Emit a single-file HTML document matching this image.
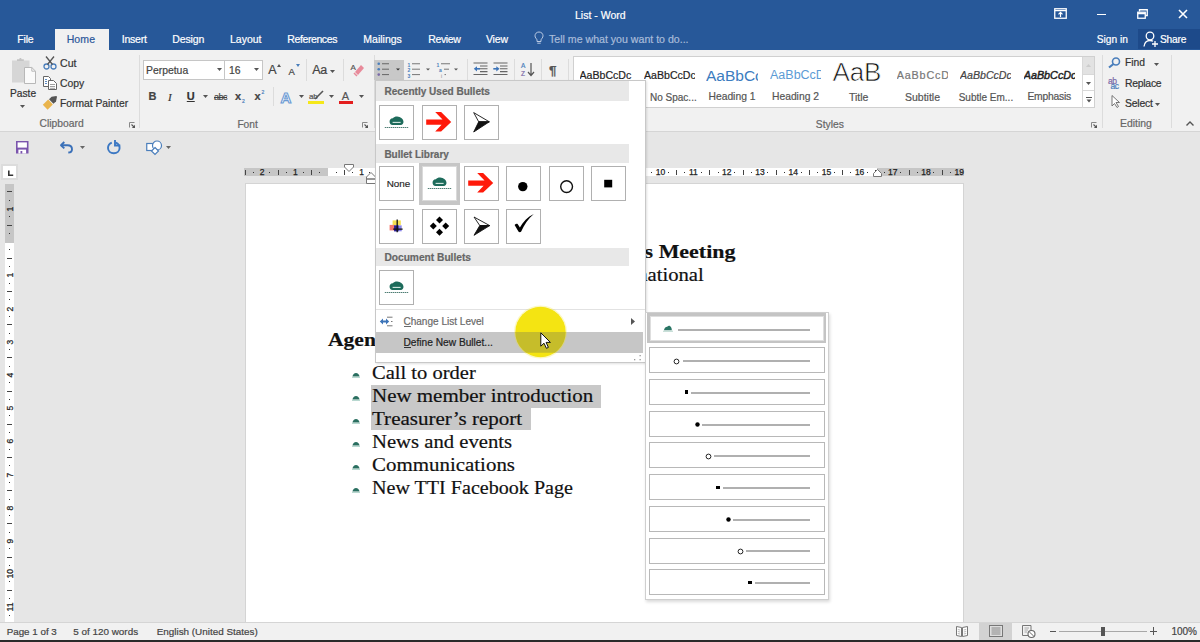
<!DOCTYPE html>
<html><head><meta charset="utf-8">
<style>
*{margin:0;padding:0;box-sizing:border-box}
html,body{width:1200px;height:642px;overflow:hidden;background:#e6e6e6;font-family:"Liberation Sans",sans-serif}
body{position:relative}
.a{position:absolute}
.t{position:absolute;white-space:nowrap;line-height:1;-webkit-text-stroke:0.2px currentColor}
svg{overflow:visible}
</style></head><body>

<div class="a" style="left:0.00px;top:0.00px;width:1200.00px;height:50.00px;background:#275899"></div>
<div class="t" style="left:575.00px;top:10.11px;font-size:10.5px;color:#fff;font-family:'Liberation Sans',sans-serif;">List - Word</div>
<div class="a" style="left:55.00px;top:29.00px;width:53.50px;height:21.00px;background:#f1f1f1"></div>
<div class="t" style="left:17.30px;top:34.41px;font-size:10.5px;color:#fff;font-family:'Liberation Sans',sans-serif;letter-spacing:-0.2px">File</div>
<div class="t" style="left:66.70px;top:34.41px;font-size:10.5px;color:#2b579a;font-family:'Liberation Sans',sans-serif;letter-spacing:0.1px">Home</div>
<div class="t" style="left:121.70px;top:34.41px;font-size:10.5px;color:#fff;font-family:'Liberation Sans',sans-serif;letter-spacing:-0.2px">Insert</div>
<div class="t" style="left:172.30px;top:34.41px;font-size:10.5px;color:#fff;font-family:'Liberation Sans',sans-serif;letter-spacing:-0.15px">Design</div>
<div class="t" style="left:230.00px;top:34.41px;font-size:10.5px;color:#fff;font-family:'Liberation Sans',sans-serif;letter-spacing:0px">Layout</div>
<div class="t" style="left:287.30px;top:34.41px;font-size:10.5px;color:#fff;font-family:'Liberation Sans',sans-serif;letter-spacing:-0.4px">References</div>
<div class="t" style="left:363.30px;top:34.41px;font-size:10.5px;color:#fff;font-family:'Liberation Sans',sans-serif;letter-spacing:0px">Mailings</div>
<div class="t" style="left:428.30px;top:34.41px;font-size:10.5px;color:#fff;font-family:'Liberation Sans',sans-serif;letter-spacing:-0.4px">Review</div>
<div class="t" style="left:486.00px;top:34.41px;font-size:10.5px;color:#fff;font-family:'Liberation Sans',sans-serif;letter-spacing:-0.2px">View</div>
<div class="t" style="left:549.00px;top:34.33px;font-size:10.6px;color:#a9bcd9;font-family:'Liberation Sans',sans-serif;">Tell me what you want to do...</div>
<div class="t" style="left:1096.70px;top:34.67px;font-size:10.2px;color:#fff;font-family:'Liberation Sans',sans-serif;">Sign in</div>
<div class="a" style="left:1138.00px;top:29.30px;width:62.00px;height:20.20px;background:#1d4a8a"></div>
<div class="t" style="left:1160.00px;top:34.67px;font-size:10.2px;color:#fff;font-family:'Liberation Sans',sans-serif;letter-spacing:-0.2px">Share</div>
<svg class="a" style="left:1054px;top:8px;" width="13" height="11" viewBox="0 0 13 11"><rect x="0.75" y="0.75" width="11.5" height="9.5" fill="none" stroke="#fff" stroke-width="1.3"/><path d="M0.75 2.6 H12.25" stroke="#fff" stroke-width="1.3"/><path d="M6.5 9 V4.5 M4.5 6.3 L6.5 4.3 L8.5 6.3" stroke="#fff" stroke-width="1.2" fill="none"/></svg>
<div class="a" style="left:1097.00px;top:13.50px;width:8.50px;height:1.70px;background:#fff"></div>
<svg class="a" style="left:1137px;top:9px;" width="11" height="10" viewBox="0 0 11 10"><path d="M2.5 2.5 V0.75 H10.25 V6.5 H8.5" fill="none" stroke="#fff" stroke-width="1.3"/><rect x="0.75" y="3.25" width="7.5" height="6" fill="none" stroke="#fff" stroke-width="1.3"/><path d="M0.75 4.6 H8.25" stroke="#fff" stroke-width="1.3"/></svg>
<svg class="a" style="left:1178px;top:9px;" width="10" height="10" viewBox="0 0 10 10"><path d="M1 1 L9 9 M9 1 L1 9" stroke="#fff" stroke-width="1.6"/></svg>
<svg class="a" style="left:534px;top:31px;" width="10" height="14" viewBox="0 0 10 14"><path d="M5 1 C2.5 1 1 2.8 1 4.8 C1 6.6 2.3 7.5 3 8.8 V10.5 H7 V8.8 C7.7 7.5 9 6.6 9 4.8 C9 2.8 7.5 1 5 1 Z" fill="none" stroke="#b9c9e3" stroke-width="1"/><path d="M3.3 12.2 H6.7" stroke="#b9c9e3" stroke-width="1"/></svg>
<svg class="a" style="left:1143px;top:31px;" width="16" height="17" viewBox="0 0 16 17"><circle cx="7" cy="5" r="3.8" fill="none" stroke="#fff" stroke-width="1.3"/><path d="M1 15.5 C1.5 11.5 3.8 9.5 7 9.5 C8.3 9.5 9.3 9.8 10 10.3" fill="none" stroke="#fff" stroke-width="1.3"/><path d="M12 10 V16 M9 13 H15" stroke="#fff" stroke-width="1.3"/></svg>
<div class="a" style="left:0.00px;top:50.00px;width:1200.00px;height:82.00px;background:#f1f1f1;border-bottom:1px solid #d5d5d5"></div>
<svg class="a" style="left:11px;top:57px;" width="26" height="28" viewBox="0 0 26 28"><rect x="1" y="3.5" width="17.5" height="22" fill="#d6d6d6"/><path d="M6 4 V2.2 H8.2 C8.4 0.6 10.4 0.6 10.6 2.2 H12.8 V4 Z" fill="#c4c4c4"/><path d="M13.5 10.5 H20.8 L24.5 14.2 V26.5 H13.5 Z" fill="#fafafa" stroke="#b8b8b8" stroke-width="1"/><path d="M20.8 10.5 V14.2 H24.5" fill="none" stroke="#b8b8b8" stroke-width="1"/></svg>
<div class="t" style="left:10.00px;top:88.57px;font-size:10.2px;color:#333;font-family:'Liberation Sans',sans-serif;">Paste</div>
<svg class="a" style="left:20px;top:104.5px;" width="5" height="3" viewBox="0 0 5 3"><path d="M0 0 H5 L2.5 3 Z" fill="#555"/></svg>
<svg class="a" style="left:43px;top:56px;" width="14" height="14" viewBox="0 0 14 14"><circle cx="3.5" cy="10.5" r="2.5" fill="none" stroke="#4a7ebb" stroke-width="1.3"/><circle cx="10.5" cy="10.5" r="2.5" fill="none" stroke="#4a7ebb" stroke-width="1.3"/><path d="M4.5 8.5 L11 0.5 M9.5 8.5 L3 0.5" stroke="#555" stroke-width="1.3"/></svg>
<div class="t" style="left:60.00px;top:58.23px;font-size:10.6px;color:#333;font-family:'Liberation Sans',sans-serif;">Cut</div>
<svg class="a" style="left:43px;top:76px;" width="14" height="14" viewBox="0 0 14 14"><path d="M0.5 0.5 H5.5 L7.5 2.5 V10.5 H0.5 Z" fill="#fff" stroke="#666"/><path d="M5.5 4.5 H10.5 L13.5 7.5 V13.5 H5.5 Z" fill="#fff" stroke="#666"/><path d="M2 3.5 H4 M2 5.5 H4 M2 7.5 H4" stroke="#4a7ebb" stroke-width="0.9"/><path d="M7 8.5 H12 M7 10.5 H12 M7 12.3 H12" stroke="#888" stroke-width="0.8"/></svg>
<div class="t" style="left:60.00px;top:78.80px;font-size:10.4px;color:#333;font-family:'Liberation Sans',sans-serif;">Copy</div>
<svg class="a" style="left:42px;top:95px;" width="16" height="16" viewBox="0 0 16 16"><path d="M0.8 9.8 L6.2 4.6 L10.8 9.4 L5.6 14.8 Z" fill="#e9b44c"/><path d="M7 4.2 L9.6 1.8 L14.4 1 L15 1.8 L14 6.4 L11.4 8.8 Z" fill="#555"/></svg>
<div class="t" style="left:60.00px;top:98.78px;font-size:10.3px;color:#333;font-family:'Liberation Sans',sans-serif;">Format Painter</div>
<div class="t" style="left:39.60px;top:119.48px;font-size:10.3px;color:#666;font-family:'Liberation Sans',sans-serif;">Clipboard</div>
<svg class="a" style="left:128.5px;top:121.5px;" width="7" height="7" viewBox="0 0 7 7"><path d="M0.5 5.5 V0.5 H5.5" stroke="#888" stroke-width="1" fill="none"/><path d="M2.5 2.5 L5.5 5.5" stroke="#555" stroke-width="1.1"/><path d="M6 2.8 V6 H2.8 Z" fill="#555"/></svg>
<div class="a" style="left:138.60px;top:55.00px;width:1.00px;height:73.00px;background:#dcdcdc"></div>
<div class="a" style="left:143.00px;top:60.40px;width:81.60px;height:19.20px;background:#fff;border:1px solid #c6c6c6"></div>
<div class="a" style="left:224.00px;top:60.40px;width:38.60px;height:19.20px;background:#fff;border:1px solid #c6c6c6"></div>
<div class="t" style="left:146.00px;top:65.50px;font-size:10.4px;color:#444;font-family:'Liberation Sans',sans-serif;">Perpetua</div>
<svg class="a" style="left:217px;top:68.2px;" width="5" height="3" viewBox="0 0 5 3"><path d="M0 0 H5 L2.5 3 Z" fill="#555"/></svg>
<div class="t" style="left:229.00px;top:65.50px;font-size:10.4px;color:#444;font-family:'Liberation Sans',sans-serif;">16</div>
<svg class="a" style="left:254px;top:68.2px;" width="5" height="3" viewBox="0 0 5 3"><path d="M0 0 H5 L2.5 3 Z" fill="#555"/></svg>
<div class="t" style="left:268.30px;top:64.32px;font-size:12.5px;color:#444;font-family:'Liberation Sans',sans-serif;">A</div>
<svg class="a" style="left:277px;top:63.5px;" width="4" height="3" viewBox="0 0 4 3"><path d="M0 3 L2 0 L4 3 Z" fill="#555"/></svg>
<div class="t" style="left:288.60px;top:66.86px;font-size:9.5px;color:#444;font-family:'Liberation Sans',sans-serif;">A</div>
<svg class="a" style="left:296px;top:63.5px;" width="4" height="3" viewBox="0 0 4 3"><path d="M0 0 H4 L2 3 Z" fill="#4a7ebb"/></svg>
<div class="a" style="left:305.50px;top:59.00px;width:1.00px;height:22.00px;background:#dcdcdc"></div>
<div class="t" style="left:312.30px;top:64.32px;font-size:12.5px;color:#444;font-family:'Liberation Sans',sans-serif;letter-spacing:-0.5px">Aa</div>
<svg class="a" style="left:330px;top:69.5px;" width="5" height="3" viewBox="0 0 5 3"><path d="M0 0 H5 L2.5 3 Z" fill="#555"/></svg>
<div class="a" style="left:342.50px;top:59.00px;width:1.00px;height:22.00px;background:#dcdcdc"></div>
<div class="t" style="left:350.50px;top:63.73px;font-size:8px;color:#555;font-family:'Liberation Sans',sans-serif;">A</div>
<svg class="a" style="left:353px;top:64px;" width="11" height="13" viewBox="0 0 11 13"><path d="M2 8 L8 1 L11 4 L5 11 Z" fill="#e88a9a"/><path d="M1 9 L4 12" stroke="#e88a9a" stroke-width="1.5"/></svg>
<div class="t" style="left:148.60px;top:91.49px;font-size:11px;color:#444;font-family:'Liberation Sans',sans-serif;font-weight:bold">B</div>
<div class="t" style="left:168.00px;top:91.59px;font-size:11px;color:#333;font-family:'Liberation Serif',serif;font-style:italic">I</div>
<div class="t" style="left:186.80px;top:91.49px;font-size:11px;color:#333;font-family:'Liberation Sans',sans-serif;text-decoration:underline;font-weight:bold">U</div>
<svg class="a" style="left:203px;top:95.3px;" width="5" height="3" viewBox="0 0 5 3"><path d="M0 0 H5 L2.5 3 Z" fill="#555"/></svg>
<div class="t" style="left:214.00px;top:92.88px;font-size:9px;color:#444;font-family:'Liberation Sans',sans-serif;text-decoration:line-through;letter-spacing:-0.5px">abc</div>
<div class="t" style="left:235.00px;top:91.19px;font-size:11px;color:#444;font-family:'Liberation Sans',sans-serif;font-weight:bold">x</div>
<div class="t" style="left:242.00px;top:98.77px;font-size:5px;color:#4a7ebb;font-family:'Liberation Sans',sans-serif;">2</div>
<div class="t" style="left:254.60px;top:91.19px;font-size:11px;color:#444;font-family:'Liberation Sans',sans-serif;font-weight:bold">x</div>
<div class="t" style="left:261.50px;top:90.27px;font-size:5px;color:#4a7ebb;font-family:'Liberation Sans',sans-serif;">2</div>
<div class="a" style="left:273.40px;top:87.00px;width:1.00px;height:19.00px;background:#dcdcdc"></div>
<div class="t" style="left:280.50px;top:89.60px;font-size:15px;color:#fff;font-family:'Liberation Sans',sans-serif;-webkit-text-stroke:1.1px #6b9ad3;font-weight:bold">A</div>
<svg class="a" style="left:298.5px;top:95.3px;" width="5" height="3" viewBox="0 0 5 3"><path d="M0 0 H5 L2.5 3 Z" fill="#555"/></svg>
<div class="t" style="left:309.00px;top:92.73px;font-size:8px;color:#555;font-family:'Liberation Sans',sans-serif;letter-spacing:-0.3px">ab</div>
<svg class="a" style="left:314px;top:90px;" width="10" height="10" viewBox="0 0 10 10"><path d="M1 9 L9 1" stroke="#555" stroke-width="1.6"/></svg>
<div class="a" style="left:308.40px;top:100.80px;width:15.40px;height:3.10px;background:#f5e81a"></div>
<svg class="a" style="left:328.5px;top:95.3px;" width="5" height="3" viewBox="0 0 5 3"><path d="M0 0 H5 L2.5 3 Z" fill="#555"/></svg>
<div class="t" style="left:341.80px;top:90.69px;font-size:11px;color:#555;font-family:'Liberation Sans',sans-serif;">A</div>
<div class="a" style="left:338.80px;top:100.80px;width:14.20px;height:3.10px;background:#e31e1e"></div>
<svg class="a" style="left:358.5px;top:95.3px;" width="5" height="3" viewBox="0 0 5 3"><path d="M0 0 H5 L2.5 3 Z" fill="#555"/></svg>
<div class="t" style="left:237.40px;top:119.67px;font-size:10.2px;color:#666;font-family:'Liberation Sans',sans-serif;">Font</div>
<svg class="a" style="left:361.5px;top:121.5px;" width="7" height="7" viewBox="0 0 7 7"><path d="M0.5 5.5 V0.5 H5.5" stroke="#888" stroke-width="1" fill="none"/><path d="M2.5 2.5 L5.5 5.5" stroke="#555" stroke-width="1.1"/><path d="M6 2.8 V6 H2.8 Z" fill="#555"/></svg>
<div class="a" style="left:373.50px;top:55.00px;width:1.00px;height:73.00px;background:#dcdcdc"></div>
<div class="a" style="left:374.20px;top:60.00px;width:29.55px;height:20.20px;background:#c8c8c8"></div>
<svg class="a" style="left:376px;top:61px;" width="26" height="18" viewBox="0 0 26 18"><circle cx="2.75" cy="2.75" r="1.3" fill="#4a7ebb"/><circle cx="2.75" cy="8.2" r="1.3" fill="#4a7ebb"/><circle cx="2.75" cy="13.6" r="1.3" fill="#7a6aa8"/><path d="M6 2.75 H13 M6 8.2 H13 M6 13.6 H13" stroke="#666" stroke-width="1"/><path d="M20 7.5 H24 L22 9.5 Z" fill="#333"/></svg>
<svg class="a" style="left:406px;top:61px;" width="26" height="18" viewBox="0 0 26 18"><text x="1.5" y="5.5" font-size="5" font-family="Liberation Sans" fill="#4a7ebb" font-weight="bold">1</text><text x="1.5" y="11" font-size="5" font-family="Liberation Sans" fill="#4a7ebb" font-weight="bold">2</text><text x="1.5" y="16.5" font-size="5" font-family="Liberation Sans" fill="#4a7ebb" font-weight="bold">3</text><path d="M6 2.75 H14 M6 8.2 H14 M6 13.6 H14" stroke="#777" stroke-width="1"/><path d="M20 7.5 H24 L22 9.5 Z" fill="#555"/></svg>
<svg class="a" style="left:436px;top:61px;" width="26" height="18" viewBox="0 0 26 18"><text x="0.5" y="5.5" font-size="5" font-family="Liberation Sans" fill="#4a7ebb" font-weight="bold">1</text><text x="3" y="11" font-size="5" font-family="Liberation Sans" fill="#4a7ebb" font-weight="bold">a</text><text x="5" y="16.5" font-size="5" font-family="Liberation Sans" fill="#888">i</text><path d="M5 2.75 H14 M8 8.2 H13 M8.5 13.6 H10" stroke="#777" stroke-width="1"/><path d="M18 7.5 H22 L20 9.5 Z" fill="#555"/></svg>
<div class="a" style="left:466.70px;top:59.00px;width:1.00px;height:22.00px;background:#dcdcdc"></div>
<svg class="a" style="left:472.5px;top:62px;" width="16" height="14" viewBox="0 0 16 14"><path d="M0.5 1 H14.5 M7 4 H14.5 M7 6.8 H14.5 M7 9.6 H14.5 M0.5 12.5 H14.5" stroke="#666" stroke-width="1.1"/><path d="M0.8 6.8 L4 4.2 V9.4 Z" fill="#3d74b8"/><path d="M3.5 6.8 H7" stroke="#3d74b8" stroke-width="1.6"/></svg>
<svg class="a" style="left:492.5px;top:62px;" width="16" height="14" viewBox="0 0 16 14"><path d="M0.5 1 H14.5 M7 4 H14.5 M7 6.8 H14.5 M7 9.6 H14.5 M0.5 12.5 H14.5" stroke="#666" stroke-width="1.1"/><path d="M6.5 6.8 L3.3 4.2 V9.4 Z" fill="#3d74b8"/><path d="M0.3 6.8 H4" stroke="#3d74b8" stroke-width="1.6"/></svg>
<div class="a" style="left:513.60px;top:59.00px;width:1.00px;height:22.00px;background:#dcdcdc"></div>
<div class="t" style="left:521.00px;top:63.00px;font-size:6.5px;color:#4a7ebb;font-family:'Liberation Sans',sans-serif;">A</div>
<div class="t" style="left:521.00px;top:70.50px;font-size:6.5px;color:#7a6aa8;font-family:'Liberation Sans',sans-serif;">Z</div>
<svg class="a" style="left:527px;top:62px;" width="8" height="15" viewBox="0 0 8 15"><path d="M4 1 V13 M1 10 L4 13.5 L7 10" stroke="#555" stroke-width="1.2" fill="none"/></svg>
<div class="a" style="left:540.60px;top:59.00px;width:1.00px;height:22.00px;background:#dcdcdc"></div>
<div class="t" style="left:549.00px;top:64.07px;font-size:13.5px;color:#555;font-family:'Liberation Sans',sans-serif;font-weight:bold">&#182;</div>
<div class="a" style="left:568.00px;top:59.00px;width:1.00px;height:22.00px;background:#dcdcdc"></div>
<div class="a" style="left:573.20px;top:56.00px;width:521.40px;height:52.20px;background:#fff;border:1px solid #d0d0d0"></div>
<div class="a" style="left:1082.00px;top:57.00px;width:12.00px;height:50.50px;border-left:1px solid #d8d8d8"></div>
<div class="a" style="left:1083.00px;top:57.00px;width:11.00px;height:17.30px;background:#e2e2e2"></div>
<svg class="a" style="left:1086px;top:64px;" width="5" height="3" viewBox="0 0 5 3"><path d="M0 3 H5 L2.5 0 Z" fill="#ccc"/></svg>
<div class="a" style="left:1083.00px;top:74.30px;width:11.00px;height:17.20px;border-top:1px solid #d8d8d8;border-bottom:1px solid #d8d8d8"></div>
<svg class="a" style="left:1086px;top:82px;" width="5" height="3" viewBox="0 0 5 3"><path d="M0 0 H5 L2.5 3 Z" fill="#555"/></svg>
<svg class="a" style="left:1085.5px;top:97px;" width="6" height="6" viewBox="0 0 6 6"><path d="M0 0.5 H6" stroke="#555"/><path d="M0.5 2.5 H5.5 L3 5.5 Z" fill="#555"/></svg>
<div class="t" style="left:579.50px;top:70.23px;font-size:10.6px;color:#222;font-family:'Liberation Sans',sans-serif;width:52px;overflow:hidden">AaBbCcDc</div>
<div class="t" style="left:644.00px;top:70.23px;font-size:10.6px;color:#222;font-family:'Liberation Sans',sans-serif;width:51px;overflow:hidden">AaBbCcDc</div>
<div class="t" style="left:650.00px;top:92.53px;font-size:10px;color:#555;font-family:'Liberation Sans',sans-serif;">No Spac...</div>
<div class="t" style="left:706.00px;top:67.88px;font-size:15.5px;color:#3b7cc0;font-family:'Liberation Sans',sans-serif;width:52px;overflow:hidden;-webkit-text-stroke:0">AaBbCc</div>
<div class="t" style="left:708.50px;top:92.28px;font-size:10.3px;color:#555;font-family:'Liberation Sans',sans-serif;">Heading 1</div>
<div class="t" style="left:770.00px;top:69.02px;font-size:12.5px;color:#5b9bd5;font-family:'Liberation Sans',sans-serif;width:51px;overflow:hidden;-webkit-text-stroke:0">AaBbCcD</div>
<div class="t" style="left:772.00px;top:92.28px;font-size:10.3px;color:#555;font-family:'Liberation Sans',sans-serif;">Heading 2</div>
<div class="a" style="left:830px;top:62.8px;width:56px;height:22px;overflow:hidden">
<div class="t" style="left:2.60px;top:-3.91px;font-size:26px;color:#111;font-family:'Liberation Sans',sans-serif;-webkit-text-stroke:0.7px #fff;letter-spacing:-0.2px">AaB</div>
</div>
<div class="t" style="left:849.00px;top:92.11px;font-size:10.5px;color:#555;font-family:'Liberation Sans',sans-serif;">Title</div>
<div class="t" style="left:896.80px;top:70.16px;font-size:10.8px;color:#777;font-family:'Liberation Sans',sans-serif;letter-spacing:0.8px;width:51px;overflow:hidden">AaBbCcD</div>
<div class="t" style="left:905.00px;top:92.11px;font-size:10.5px;color:#555;font-family:'Liberation Sans',sans-serif;">Subtitle</div>
<div class="t" style="left:960.00px;top:70.33px;font-size:10.6px;color:#444;font-family:'Liberation Sans',sans-serif;font-style:italic;width:51px;overflow:hidden">AaBbCcDc</div>
<div class="t" style="left:958.70px;top:92.53px;font-size:10px;color:#555;font-family:'Liberation Sans',sans-serif;">Subtle Em...</div>
<div class="t" style="left:1023.70px;top:70.16px;font-size:10.8px;color:#222;font-family:'Liberation Sans',sans-serif;font-style:italic;width:51px;overflow:hidden;-webkit-text-stroke:0.45px #222">AaBbCcDc</div>
<div class="t" style="left:1027.40px;top:92.28px;font-size:10.3px;color:#555;font-family:'Liberation Sans',sans-serif;letter-spacing:-0.2px">Emphasis</div>
<div class="t" style="left:815.80px;top:119.58px;font-size:10.3px;color:#666;font-family:'Liberation Sans',sans-serif;">Styles</div>
<svg class="a" style="left:1090.5px;top:121.5px;" width="7" height="7" viewBox="0 0 7 7"><path d="M0.5 5.5 V0.5 H5.5" stroke="#888" stroke-width="1" fill="none"/><path d="M2.5 2.5 L5.5 5.5" stroke="#555" stroke-width="1.1"/><path d="M6 2.8 V6 H2.8 Z" fill="#555"/></svg>
<div class="a" style="left:1101.70px;top:55.00px;width:1.00px;height:73.00px;background:#dcdcdc"></div>
<svg class="a" style="left:1108px;top:57px;" width="13" height="11" viewBox="0 0 13 11"><circle cx="8" cy="4.5" r="3.5" fill="none" stroke="#4a7ebb" stroke-width="1.6"/><path d="M5.5 7 L1 10.5" stroke="#4a7ebb" stroke-width="2.2"/></svg>
<div class="t" style="left:1125.00px;top:58.48px;font-size:10.3px;color:#333;font-family:'Liberation Sans',sans-serif;">Find</div>
<svg class="a" style="left:1154px;top:62.5px;" width="5" height="3" viewBox="0 0 5 3"><path d="M0 0 H5 L2.5 3 Z" fill="#555"/></svg>
<div class="t" style="left:1108.00px;top:77.30px;font-size:8.5px;color:#7a6aa8;font-family:'Liberation Sans',sans-serif;letter-spacing:-0.4px">ab</div>
<div class="t" style="left:1110.50px;top:82.30px;font-size:8.5px;color:#4a7ebb;font-family:'Liberation Sans',sans-serif;letter-spacing:-0.4px">ac</div>
<div class="t" style="left:1125.00px;top:78.80px;font-size:10.4px;color:#333;font-family:'Liberation Sans',sans-serif;letter-spacing:-0.25px">Replace</div>
<svg class="a" style="left:1111px;top:95px;" width="10" height="13" viewBox="0 0 10 13"><path d="M1 0.5 V11 L3.5 8.5 L6 12.5 L7.5 11.5 L5 7.5 H8.5 Z" fill="#fff" stroke="#666" stroke-width="0.9"/></svg>
<div class="t" style="left:1125.00px;top:98.70px;font-size:10.4px;color:#333;font-family:'Liberation Sans',sans-serif;letter-spacing:-0.2px">Select</div>
<svg class="a" style="left:1155px;top:102.5px;" width="5" height="3" viewBox="0 0 5 3"><path d="M0 0 H5 L2.5 3 Z" fill="#555"/></svg>
<div class="t" style="left:1120.00px;top:119.40px;font-size:10.4px;color:#666;font-family:'Liberation Sans',sans-serif;">Editing</div>
<div class="a" style="left:1171.00px;top:55.00px;width:1.00px;height:73.00px;background:#dcdcdc"></div>
<svg class="a" style="left:1185.5px;top:121px;" width="8" height="5" viewBox="0 0 8 5"><path d="M0.5 4.5 L4 1 L7.5 4.5" stroke="#555" stroke-width="1.4" fill="none"/></svg>
<svg class="a" style="left:16px;top:141px;" width="13" height="13" viewBox="0 0 13 13"><path d="M0 0 H12.5 V12.5 H0 Z" fill="#7b55ad"/><rect x="1.6" y="1.4" width="9.3" height="5.2" fill="#fff"/><rect x="2.4" y="8.6" width="7.7" height="3.9" fill="#fff"/><rect x="4.5" y="10" width="1.8" height="2.5" fill="#7b55ad"/></svg>
<svg class="a" style="left:60px;top:140.5px;" width="13" height="12" viewBox="0 0 13 12"><path d="M4.3 1 L1 4.2 L4.3 7.4" fill="none" stroke="#3a70b8" stroke-width="1.9" stroke-linejoin="round"/><path d="M1.5 4.2 H7.5 C10.3 4.2 12 6 12 8.2 C12 10.3 10.3 11.5 8.3 11.5" fill="none" stroke="#3a70b8" stroke-width="1.9"/></svg>
<svg class="a" style="left:80px;top:145.5px;" width="5" height="3" viewBox="0 0 5 3"><path d="M0 0 H5 L2.5 3 Z" fill="#666"/></svg>
<svg class="a" style="left:106px;top:140px;" width="15" height="14" viewBox="0 0 15 14"><path d="M9.8 2.6 C12.3 3.6 13.6 5.8 13.6 8 C13.6 11 11 13.2 7.8 13.2 C4.6 13.2 2 11 2 8 C2 5.6 3.6 3.5 5.8 2.6" fill="none" stroke="#3c78c3" stroke-width="1.9"/><path d="M9 0 V5.5 H14.3" fill="none" stroke="#3c78c3" stroke-width="1.9"/></svg>
<svg class="a" style="left:146px;top:140px;" width="17" height="15" viewBox="0 0 17 15"><rect x="0.75" y="3.5" width="8.5" height="7" fill="#fff" stroke="#4a7ebb" stroke-width="1.2"/><circle cx="11" cy="5.5" r="4.5" fill="#fff" stroke="#4a7ebb" stroke-width="1.2"/><path d="M9 7.5 L12.5 11 L9 14.5 L5.5 11 Z" fill="#fff" stroke="#4a7ebb" stroke-width="1.2"/></svg>
<svg class="a" style="left:166px;top:145.5px;" width="5" height="3" viewBox="0 0 5 3"><path d="M0 0 H5 L2.5 3 Z" fill="#666"/></svg>
<div class="a" style="left:246.00px;top:184.00px;width:716.50px;height:438.00px;background:#fff;box-shadow:0 0 0 1px #d4d4d4"></div>
<div class="a" style="left:243.70px;top:167.50px;width:720.30px;height:8.50px;background:#c6c6c6"></div>
<div class="a" style="left:327.50px;top:167.50px;width:549.20px;height:8.50px;background:#fff"></div>
<div class="a" style="left:245.00px;top:170.00px;width:1.00px;height:5.00px;background:#444"></div>
<div class="a" style="left:253.00px;top:172.00px;width:1.00px;height:1.00px;background:#333"></div>
<div class="t" style="left:259.70px;top:168.40px;font-size:8.5px;color:#222;font-family:'Liberation Sans',sans-serif;-webkit-text-stroke:0.25px #222">2</div>
<div class="a" style="left:269.00px;top:172.00px;width:1.00px;height:1.00px;background:#333"></div>
<div class="a" style="left:278.00px;top:170.00px;width:1.00px;height:5.00px;background:#444"></div>
<div class="a" style="left:286.00px;top:172.00px;width:1.00px;height:1.00px;background:#333"></div>
<div class="t" style="left:292.90px;top:168.40px;font-size:8.5px;color:#222;font-family:'Liberation Sans',sans-serif;-webkit-text-stroke:0.25px #222">1</div>
<div class="a" style="left:303.00px;top:172.00px;width:1.00px;height:1.00px;background:#333"></div>
<div class="a" style="left:311.00px;top:170.00px;width:1.00px;height:5.00px;background:#444"></div>
<div class="a" style="left:319.00px;top:172.00px;width:1.00px;height:1.00px;background:#333"></div>
<div class="a" style="left:336.00px;top:172.00px;width:1.00px;height:1.00px;background:#333"></div>
<div class="a" style="left:344.00px;top:170.00px;width:1.00px;height:5.00px;background:#444"></div>
<div class="a" style="left:352.00px;top:172.00px;width:1.00px;height:1.00px;background:#333"></div>
<div class="t" style="left:359.30px;top:168.40px;font-size:8.5px;color:#222;font-family:'Liberation Sans',sans-serif;-webkit-text-stroke:0.25px #222">1</div>
<div class="a" style="left:369.00px;top:172.00px;width:1.00px;height:1.00px;background:#333"></div>
<div class="a" style="left:377.00px;top:170.00px;width:1.00px;height:5.00px;background:#444"></div>
<div class="a" style="left:386.00px;top:172.00px;width:1.00px;height:1.00px;background:#333"></div>
<div class="t" style="left:392.50px;top:168.40px;font-size:8.5px;color:#222;font-family:'Liberation Sans',sans-serif;-webkit-text-stroke:0.25px #222">2</div>
<div class="a" style="left:402.00px;top:172.00px;width:1.00px;height:1.00px;background:#333"></div>
<div class="a" style="left:411.00px;top:170.00px;width:1.00px;height:5.00px;background:#444"></div>
<div class="a" style="left:419.00px;top:172.00px;width:1.00px;height:1.00px;background:#333"></div>
<div class="t" style="left:425.70px;top:168.40px;font-size:8.5px;color:#222;font-family:'Liberation Sans',sans-serif;-webkit-text-stroke:0.25px #222">3</div>
<div class="a" style="left:435.00px;top:172.00px;width:1.00px;height:1.00px;background:#333"></div>
<div class="a" style="left:444.00px;top:170.00px;width:1.00px;height:5.00px;background:#444"></div>
<div class="a" style="left:452.00px;top:172.00px;width:1.00px;height:1.00px;background:#333"></div>
<div class="t" style="left:458.90px;top:168.40px;font-size:8.5px;color:#222;font-family:'Liberation Sans',sans-serif;-webkit-text-stroke:0.25px #222">4</div>
<div class="a" style="left:469.00px;top:172.00px;width:1.00px;height:1.00px;background:#333"></div>
<div class="a" style="left:477.00px;top:170.00px;width:1.00px;height:5.00px;background:#444"></div>
<div class="a" style="left:485.00px;top:172.00px;width:1.00px;height:1.00px;background:#333"></div>
<div class="t" style="left:492.10px;top:168.40px;font-size:8.5px;color:#222;font-family:'Liberation Sans',sans-serif;-webkit-text-stroke:0.25px #222">5</div>
<div class="a" style="left:502.00px;top:172.00px;width:1.00px;height:1.00px;background:#333"></div>
<div class="a" style="left:510.00px;top:170.00px;width:1.00px;height:5.00px;background:#444"></div>
<div class="a" style="left:518.00px;top:172.00px;width:1.00px;height:1.00px;background:#333"></div>
<div class="t" style="left:525.30px;top:168.40px;font-size:8.5px;color:#222;font-family:'Liberation Sans',sans-serif;-webkit-text-stroke:0.25px #222">6</div>
<div class="a" style="left:535.00px;top:172.00px;width:1.00px;height:1.00px;background:#333"></div>
<div class="a" style="left:543.00px;top:170.00px;width:1.00px;height:5.00px;background:#444"></div>
<div class="a" style="left:552.00px;top:172.00px;width:1.00px;height:1.00px;background:#333"></div>
<div class="t" style="left:558.50px;top:168.40px;font-size:8.5px;color:#222;font-family:'Liberation Sans',sans-serif;-webkit-text-stroke:0.25px #222">7</div>
<div class="a" style="left:568.00px;top:172.00px;width:1.00px;height:1.00px;background:#333"></div>
<div class="a" style="left:577.00px;top:170.00px;width:1.00px;height:5.00px;background:#444"></div>
<div class="a" style="left:585.00px;top:172.00px;width:1.00px;height:1.00px;background:#333"></div>
<div class="t" style="left:591.70px;top:168.40px;font-size:8.5px;color:#222;font-family:'Liberation Sans',sans-serif;-webkit-text-stroke:0.25px #222">8</div>
<div class="a" style="left:601.00px;top:172.00px;width:1.00px;height:1.00px;background:#333"></div>
<div class="a" style="left:610.00px;top:170.00px;width:1.00px;height:5.00px;background:#444"></div>
<div class="a" style="left:618.00px;top:172.00px;width:1.00px;height:1.00px;background:#333"></div>
<div class="t" style="left:624.90px;top:168.40px;font-size:8.5px;color:#222;font-family:'Liberation Sans',sans-serif;-webkit-text-stroke:0.25px #222">9</div>
<div class="a" style="left:635.00px;top:172.00px;width:1.00px;height:1.00px;background:#333"></div>
<div class="a" style="left:643.00px;top:170.00px;width:1.00px;height:5.00px;background:#444"></div>
<div class="a" style="left:651.00px;top:172.00px;width:1.00px;height:1.00px;background:#333"></div>
<div class="t" style="left:655.70px;top:168.40px;font-size:8.5px;color:#222;font-family:'Liberation Sans',sans-serif;-webkit-text-stroke:0.25px #222">10</div>
<div class="a" style="left:668.00px;top:172.00px;width:1.00px;height:1.00px;background:#333"></div>
<div class="a" style="left:676.00px;top:170.00px;width:1.00px;height:5.00px;background:#444"></div>
<div class="a" style="left:684.00px;top:172.00px;width:1.00px;height:1.00px;background:#333"></div>
<div class="t" style="left:688.90px;top:168.40px;font-size:8.5px;color:#222;font-family:'Liberation Sans',sans-serif;-webkit-text-stroke:0.25px #222">11</div>
<div class="a" style="left:701.00px;top:172.00px;width:1.00px;height:1.00px;background:#333"></div>
<div class="a" style="left:709.00px;top:170.00px;width:1.00px;height:5.00px;background:#444"></div>
<div class="a" style="left:718.00px;top:172.00px;width:1.00px;height:1.00px;background:#333"></div>
<div class="t" style="left:722.10px;top:168.40px;font-size:8.5px;color:#222;font-family:'Liberation Sans',sans-serif;-webkit-text-stroke:0.25px #222">12</div>
<div class="a" style="left:734.00px;top:172.00px;width:1.00px;height:1.00px;background:#333"></div>
<div class="a" style="left:743.00px;top:170.00px;width:1.00px;height:5.00px;background:#444"></div>
<div class="a" style="left:751.00px;top:172.00px;width:1.00px;height:1.00px;background:#333"></div>
<div class="t" style="left:755.30px;top:168.40px;font-size:8.5px;color:#222;font-family:'Liberation Sans',sans-serif;-webkit-text-stroke:0.25px #222">13</div>
<div class="a" style="left:767.00px;top:172.00px;width:1.00px;height:1.00px;background:#333"></div>
<div class="a" style="left:776.00px;top:170.00px;width:1.00px;height:5.00px;background:#444"></div>
<div class="a" style="left:784.00px;top:172.00px;width:1.00px;height:1.00px;background:#333"></div>
<div class="t" style="left:788.50px;top:168.40px;font-size:8.5px;color:#222;font-family:'Liberation Sans',sans-serif;-webkit-text-stroke:0.25px #222">14</div>
<div class="a" style="left:801.00px;top:172.00px;width:1.00px;height:1.00px;background:#333"></div>
<div class="a" style="left:809.00px;top:170.00px;width:1.00px;height:5.00px;background:#444"></div>
<div class="a" style="left:817.00px;top:172.00px;width:1.00px;height:1.00px;background:#333"></div>
<div class="t" style="left:821.70px;top:168.40px;font-size:8.5px;color:#222;font-family:'Liberation Sans',sans-serif;-webkit-text-stroke:0.25px #222">15</div>
<div class="a" style="left:834.00px;top:172.00px;width:1.00px;height:1.00px;background:#333"></div>
<div class="a" style="left:842.00px;top:170.00px;width:1.00px;height:5.00px;background:#444"></div>
<div class="a" style="left:850.00px;top:172.00px;width:1.00px;height:1.00px;background:#333"></div>
<div class="t" style="left:854.90px;top:168.40px;font-size:8.5px;color:#222;font-family:'Liberation Sans',sans-serif;-webkit-text-stroke:0.25px #222">16</div>
<div class="a" style="left:867.00px;top:172.00px;width:1.00px;height:1.00px;background:#333"></div>
<div class="a" style="left:875.00px;top:170.00px;width:1.00px;height:5.00px;background:#444"></div>
<div class="a" style="left:884.00px;top:172.00px;width:1.00px;height:1.00px;background:#333"></div>
<div class="t" style="left:888.10px;top:168.40px;font-size:8.5px;color:#222;font-family:'Liberation Sans',sans-serif;-webkit-text-stroke:0.25px #222">17</div>
<div class="a" style="left:900.00px;top:172.00px;width:1.00px;height:1.00px;background:#333"></div>
<div class="a" style="left:909.00px;top:170.00px;width:1.00px;height:5.00px;background:#444"></div>
<div class="a" style="left:917.00px;top:172.00px;width:1.00px;height:1.00px;background:#333"></div>
<div class="t" style="left:921.30px;top:168.40px;font-size:8.5px;color:#222;font-family:'Liberation Sans',sans-serif;-webkit-text-stroke:0.25px #222">18</div>
<div class="a" style="left:933.00px;top:172.00px;width:1.00px;height:1.00px;background:#333"></div>
<div class="a" style="left:942.00px;top:170.00px;width:1.00px;height:5.00px;background:#444"></div>
<div class="a" style="left:950.00px;top:172.00px;width:1.00px;height:1.00px;background:#333"></div>
<div class="t" style="left:954.50px;top:168.40px;font-size:8.5px;color:#222;font-family:'Liberation Sans',sans-serif;-webkit-text-stroke:0.25px #222">19</div>
<div class="a" style="left:3.30px;top:165.80px;width:12.40px;height:12.50px;background:#fff;box-shadow:0 0 0 2px #dcdcdc"></div>
<svg class="a" style="left:5px;top:167px;" width="10" height="10" viewBox="0 0 10 10"><path d="M3.8 3.5 V8.2 H8.2" stroke="#333" stroke-width="1.6" fill="none"/></svg>
<div class="a" style="left:5.00px;top:183.75px;width:8.75px;height:58.75px;background:#c6c6c6"></div>
<div class="a" style="left:5.00px;top:242.50px;width:8.75px;height:379.50px;background:#fff"></div>
<div class="a" style="left:7.00px;top:191.00px;width:5.00px;height:1.00px;background:#444"></div>
<div class="a" style="left:9.00px;top:200.00px;width:1.00px;height:1.00px;background:#333"></div>
<div class="t" style="left:5px;top:205.00px;width:9px;height:8px;font-size:8.5px;line-height:8px;text-align:center;color:#222;-webkit-text-stroke:0.25px #222;transform:rotate(-90deg)">1</div>
<div class="a" style="left:9.00px;top:216.00px;width:1.00px;height:1.00px;background:#333"></div>
<div class="a" style="left:7.00px;top:225.00px;width:5.00px;height:1.00px;background:#444"></div>
<div class="a" style="left:9.00px;top:233.00px;width:1.00px;height:1.00px;background:#333"></div>
<div class="a" style="left:9.00px;top:249.00px;width:1.00px;height:1.00px;background:#333"></div>
<div class="a" style="left:7.00px;top:258.00px;width:5.00px;height:1.00px;background:#444"></div>
<div class="a" style="left:9.00px;top:266.00px;width:1.00px;height:1.00px;background:#333"></div>
<div class="t" style="left:5px;top:271.40px;width:9px;height:8px;font-size:8.5px;line-height:8px;text-align:center;color:#222;-webkit-text-stroke:0.25px #222;transform:rotate(-90deg)">1</div>
<div class="a" style="left:9.00px;top:283.00px;width:1.00px;height:1.00px;background:#333"></div>
<div class="a" style="left:7.00px;top:291.00px;width:5.00px;height:1.00px;background:#444"></div>
<div class="a" style="left:9.00px;top:299.00px;width:1.00px;height:1.00px;background:#333"></div>
<div class="t" style="left:5px;top:304.60px;width:9px;height:8px;font-size:8.5px;line-height:8px;text-align:center;color:#222;-webkit-text-stroke:0.25px #222;transform:rotate(-90deg)">2</div>
<div class="a" style="left:9.00px;top:316.00px;width:1.00px;height:1.00px;background:#333"></div>
<div class="a" style="left:7.00px;top:324.00px;width:5.00px;height:1.00px;background:#444"></div>
<div class="a" style="left:9.00px;top:333.00px;width:1.00px;height:1.00px;background:#333"></div>
<div class="t" style="left:5px;top:337.80px;width:9px;height:8px;font-size:8.5px;line-height:8px;text-align:center;color:#222;-webkit-text-stroke:0.25px #222;transform:rotate(-90deg)">3</div>
<div class="a" style="left:9.00px;top:349.00px;width:1.00px;height:1.00px;background:#333"></div>
<div class="a" style="left:7.00px;top:357.00px;width:5.00px;height:1.00px;background:#444"></div>
<div class="a" style="left:9.00px;top:366.00px;width:1.00px;height:1.00px;background:#333"></div>
<div class="t" style="left:5px;top:371.00px;width:9px;height:8px;font-size:8.5px;line-height:8px;text-align:center;color:#222;-webkit-text-stroke:0.25px #222;transform:rotate(-90deg)">4</div>
<div class="a" style="left:9.00px;top:382.00px;width:1.00px;height:1.00px;background:#333"></div>
<div class="a" style="left:7.00px;top:391.00px;width:5.00px;height:1.00px;background:#444"></div>
<div class="a" style="left:9.00px;top:399.00px;width:1.00px;height:1.00px;background:#333"></div>
<div class="t" style="left:5px;top:404.20px;width:9px;height:8px;font-size:8.5px;line-height:8px;text-align:center;color:#222;-webkit-text-stroke:0.25px #222;transform:rotate(-90deg)">5</div>
<div class="a" style="left:9.00px;top:415.00px;width:1.00px;height:1.00px;background:#333"></div>
<div class="a" style="left:7.00px;top:424.00px;width:5.00px;height:1.00px;background:#444"></div>
<div class="a" style="left:9.00px;top:432.00px;width:1.00px;height:1.00px;background:#333"></div>
<div class="t" style="left:5px;top:437.40px;width:9px;height:8px;font-size:8.5px;line-height:8px;text-align:center;color:#222;-webkit-text-stroke:0.25px #222;transform:rotate(-90deg)">6</div>
<div class="a" style="left:9.00px;top:449.00px;width:1.00px;height:1.00px;background:#333"></div>
<div class="a" style="left:7.00px;top:457.00px;width:5.00px;height:1.00px;background:#444"></div>
<div class="a" style="left:9.00px;top:465.00px;width:1.00px;height:1.00px;background:#333"></div>
<div class="t" style="left:5px;top:470.60px;width:9px;height:8px;font-size:8.5px;line-height:8px;text-align:center;color:#222;-webkit-text-stroke:0.25px #222;transform:rotate(-90deg)">7</div>
<div class="a" style="left:9.00px;top:482.00px;width:1.00px;height:1.00px;background:#333"></div>
<div class="a" style="left:7.00px;top:490.00px;width:5.00px;height:1.00px;background:#444"></div>
<div class="a" style="left:9.00px;top:499.00px;width:1.00px;height:1.00px;background:#333"></div>
<div class="t" style="left:5px;top:503.80px;width:9px;height:8px;font-size:8.5px;line-height:8px;text-align:center;color:#222;-webkit-text-stroke:0.25px #222;transform:rotate(-90deg)">8</div>
<div class="a" style="left:9.00px;top:515.00px;width:1.00px;height:1.00px;background:#333"></div>
<div class="a" style="left:7.00px;top:523.00px;width:5.00px;height:1.00px;background:#444"></div>
<div class="a" style="left:9.00px;top:532.00px;width:1.00px;height:1.00px;background:#333"></div>
<div class="t" style="left:5px;top:537.00px;width:9px;height:8px;font-size:8.5px;line-height:8px;text-align:center;color:#222;-webkit-text-stroke:0.25px #222;transform:rotate(-90deg)">9</div>
<div class="a" style="left:9.00px;top:548.00px;width:1.00px;height:1.00px;background:#333"></div>
<div class="a" style="left:7.00px;top:557.00px;width:5.00px;height:1.00px;background:#444"></div>
<div class="a" style="left:9.00px;top:565.00px;width:1.00px;height:1.00px;background:#333"></div>
<div class="t" style="left:5px;top:570.20px;width:9px;height:8px;font-size:8.5px;line-height:8px;text-align:center;color:#222;-webkit-text-stroke:0.25px #222;transform:rotate(-90deg)">10</div>
<div class="a" style="left:9.00px;top:581.00px;width:1.00px;height:1.00px;background:#333"></div>
<div class="a" style="left:7.00px;top:590.00px;width:5.00px;height:1.00px;background:#444"></div>
<div class="a" style="left:9.00px;top:598.00px;width:1.00px;height:1.00px;background:#333"></div>
<div class="t" style="left:5px;top:603.40px;width:9px;height:8px;font-size:8.5px;line-height:8px;text-align:center;color:#222;-webkit-text-stroke:0.25px #222;transform:rotate(-90deg)">11</div>
<div class="a" style="left:9.00px;top:615.00px;width:1.00px;height:1.00px;background:#333"></div>
<svg class="a" style="left:344px;top:164px;" width="10" height="9" viewBox="0 0 10 9"><path d="M0.5 0.5 H9.5 V3 L5 7.5 L0.5 3 Z" fill="#fff" stroke="#777" stroke-width="1"/></svg>
<svg class="a" style="left:366px;top:172px;" width="10" height="12" viewBox="0 0 10 12"><path d="M5 0.5 L9.5 5 V7 H0.5 V5 Z M0.5 7 H9.5 V11.5 H0.5 Z" fill="#fff" stroke="#777" stroke-width="1"/></svg>
<svg class="a" style="left:873px;top:169px;" width="9" height="8" viewBox="0 0 9 8"><path d="M4.5 0.5 L8.5 4.5 V7.5 H0.5 V4.5 Z" fill="#fff" stroke="#777" stroke-width="1"/></svg>
<div class="t" style="left:0.00px;top:241.89px;font-size:19.6px;color:#111;font-family:'Liberation Serif',serif;font-weight:bold;left:auto;right:465px;transform:scaleX(1.12);transform-origin:100% 50%">Directors Meeting</div>
<div class="t" style="left:0.00px;top:264.72px;font-size:19.8px;color:#111;font-family:'Liberation Serif',serif;left:auto;right:496px;transform:scaleX(1.045);transform-origin:100% 50%">TTI International</div>
<div class="t" style="left:328.00px;top:329.88px;font-size:19.6px;color:#111;font-family:'Liberation Serif',serif;font-weight:bold;transform:scaleX(1.1);transform-origin:0 50%">Agenda</div>
<div class="a" style="left:371.30px;top:385.20px;width:229.70px;height:22.50px;background:#c8c8c8"></div>
<div class="a" style="left:371.30px;top:407.70px;width:159.40px;height:22.30px;background:#c8c8c8"></div>
<div class="t" style="left:371.70px;top:363.02px;font-size:19.8px;color:#111;font-family:'Liberation Serif',serif;transform:scaleX(1.038);transform-origin:0 50%">Call to order</div>
<svg class="a" style="left:351px;top:371.6px;" width="10" height="6" viewBox="0 0 10 6"><path d="M1.5 4.6 C1.8 2.2 3.3 1 5 1 C6.7 1 8.2 2.2 8.5 4.6 Z" fill="#2a6f60"/><path d="M1 5.3 H9" stroke="#9cc8bd" stroke-width="0.9"/></svg>
<div class="t" style="left:371.70px;top:386.02px;font-size:19.8px;color:#111;font-family:'Liberation Serif',serif;transform:scaleX(1.0595);transform-origin:0 50%">New member introduction</div>
<svg class="a" style="left:351px;top:394.6px;" width="10" height="6" viewBox="0 0 10 6"><path d="M1.5 4.6 C1.8 2.2 3.3 1 5 1 C6.7 1 8.2 2.2 8.5 4.6 Z" fill="#2a6f60"/><path d="M1 5.3 H9" stroke="#9cc8bd" stroke-width="0.9"/></svg>
<div class="t" style="left:371.70px;top:409.02px;font-size:19.8px;color:#111;font-family:'Liberation Serif',serif;transform:scaleX(1.064);transform-origin:0 50%">Treasurer&#8217;s report</div>
<svg class="a" style="left:351px;top:417.6px;" width="10" height="6" viewBox="0 0 10 6"><path d="M1.5 4.6 C1.8 2.2 3.3 1 5 1 C6.7 1 8.2 2.2 8.5 4.6 Z" fill="#2a6f60"/><path d="M1 5.3 H9" stroke="#9cc8bd" stroke-width="0.9"/></svg>
<div class="t" style="left:371.70px;top:432.02px;font-size:19.8px;color:#111;font-family:'Liberation Serif',serif;transform:scaleX(1.045);transform-origin:0 50%">News and events</div>
<svg class="a" style="left:351px;top:440.6px;" width="10" height="6" viewBox="0 0 10 6"><path d="M1.5 4.6 C1.8 2.2 3.3 1 5 1 C6.7 1 8.2 2.2 8.5 4.6 Z" fill="#2a6f60"/><path d="M1 5.3 H9" stroke="#9cc8bd" stroke-width="0.9"/></svg>
<div class="t" style="left:371.70px;top:455.02px;font-size:19.8px;color:#111;font-family:'Liberation Serif',serif;transform:scaleX(1.058);transform-origin:0 50%">Communications</div>
<svg class="a" style="left:351px;top:463.6px;" width="10" height="6" viewBox="0 0 10 6"><path d="M1.5 4.6 C1.8 2.2 3.3 1 5 1 C6.7 1 8.2 2.2 8.5 4.6 Z" fill="#2a6f60"/><path d="M1 5.3 H9" stroke="#9cc8bd" stroke-width="0.9"/></svg>
<div class="t" style="left:371.70px;top:478.02px;font-size:19.8px;color:#111;font-family:'Liberation Serif',serif;transform:scaleX(1.015);transform-origin:0 50%">New TTI Facebook Page</div>
<svg class="a" style="left:351px;top:486.6px;" width="10" height="6" viewBox="0 0 10 6"><path d="M1.5 4.6 C1.8 2.2 3.3 1 5 1 C6.7 1 8.2 2.2 8.5 4.6 Z" fill="#2a6f60"/><path d="M1 5.3 H9" stroke="#9cc8bd" stroke-width="0.9"/></svg>
<div class="a" style="left:374.70px;top:80.40px;width:270.90px;height:283.00px;background:#fff;border:1px solid #c8c8c8;box-shadow:1px 1px 2px rgba(0,0,0,0.12)"></div>
<div class="a" style="left:375.70px;top:81.25px;width:253.30px;height:19.55px;background:#e8e8e8"></div>
<div class="t" style="left:384.40px;top:87.29px;font-size:10.05px;color:#666;font-family:'Liberation Sans',sans-serif;font-weight:bold">Recently Used Bullets</div>
<div class="a" style="left:375.70px;top:144.20px;width:253.30px;height:18.40px;background:#e8e8e8"></div>
<div class="t" style="left:384.40px;top:149.84px;font-size:10px;color:#666;font-family:'Liberation Sans',sans-serif;font-weight:bold">Bullet Library</div>
<div class="a" style="left:375.70px;top:248.20px;width:253.30px;height:18.20px;background:#e8e8e8"></div>
<div class="t" style="left:384.40px;top:253.17px;font-size:10.2px;color:#666;font-family:'Liberation Sans',sans-serif;font-weight:bold">Document Bullets</div>
<div class="a" style="left:379.30px;top:104.90px;width:35.20px;height:35.00px;background:#fff;border:1px solid #b0b0b0"></div>
<svg class="a" style="left:379.3px;top:104.9px;" width="35" height="35" viewBox="0 0 35 35"><path d="M10.6 17.2 C10.2 15.2 11.6 13.4 13.8 13.3 C14.9 11.9 16.6 11.3 18.2 11.4 C21.6 11.6 23.8 13.5 24.4 15.9 C24.9 18.1 23.6 19.9 21.6 19.9 H13.4 C11.8 19.9 10.9 18.8 10.6 17.2 Z" fill="#1d6b5b"/><path d="M13.6 17.4 H21.6" stroke="#d8ebe5" stroke-width="1.1"/><path d="M5.8 22.5 H29.2" stroke="#3b6e64" stroke-width="0.9" stroke-dasharray="1.5 0.5"/></svg>
<div class="a" style="left:421.60px;top:104.90px;width:35.20px;height:35.00px;background:#fff;border:1px solid #b0b0b0"></div>
<svg class="a" style="left:421.6px;top:104.9px;" width="35" height="35" viewBox="0 0 35 35"><path d="M4.2 14.6 H20.5 L13.2 7 H19.1 L29.2 16.9 L19.1 26.4 H13.2 L19.6 19.7 H4.2 Z" fill="#ff1a0a"/></svg>
<div class="a" style="left:463.90px;top:104.90px;width:35.20px;height:35.00px;background:#fff;border:1px solid #b0b0b0"></div>
<svg class="a" style="left:463.9px;top:104.9px;" width="35" height="35" viewBox="0 0 35 35"><path d="M9.7 7.6 L25.3 16.8 L14.7 16.8 Z" fill="#fff" stroke="#111" stroke-width="0.9" stroke-linejoin="round"/><path d="M25.3 16.8 L9.7 27 L14.7 16.8 Z" fill="#111" stroke="#111" stroke-width="0.9" stroke-linejoin="round"/></svg>
<div class="a" style="left:379.30px;top:166.40px;width:35.20px;height:35.00px;background:#fff;border:1px solid #b0b0b0"></div>
<div class="t" style="left:386.70px;top:179.42px;font-size:9.9px;color:#222;font-family:'Liberation Sans',sans-serif;-webkit-text-stroke:0.15px #222">None</div>
<div class="a" style="left:418.60px;top:163.20px;width:41.40px;height:41.80px;background:#c6c6c6"></div>
<div class="a" style="left:421.60px;top:166.40px;width:35.20px;height:35.00px;background:#fff;border:1px solid #dadada"></div>
<svg class="a" style="left:421.6px;top:166.4px;" width="35" height="35" viewBox="0 0 35 35"><path d="M10.6 17.2 C10.2 15.2 11.6 13.4 13.8 13.3 C14.9 11.9 16.6 11.3 18.2 11.4 C21.6 11.6 23.8 13.5 24.4 15.9 C24.9 18.1 23.6 19.9 21.6 19.9 H13.4 C11.8 19.9 10.9 18.8 10.6 17.2 Z" fill="#1d6b5b"/><path d="M13.6 17.4 H21.6" stroke="#d8ebe5" stroke-width="1.1"/><path d="M5.8 22.5 H29.2" stroke="#3b6e64" stroke-width="0.9" stroke-dasharray="1.5 0.5"/></svg>
<div class="a" style="left:463.90px;top:166.40px;width:35.20px;height:35.00px;background:#fff;border:1px solid #b0b0b0"></div>
<svg class="a" style="left:463.9px;top:166.4px;" width="35" height="35" viewBox="0 0 35 35"><path d="M4.2 14.6 H20.5 L13.2 7 H19.1 L29.2 16.9 L19.1 26.4 H13.2 L19.6 19.7 H4.2 Z" fill="#ff1a0a"/></svg>
<div class="a" style="left:506.20px;top:166.40px;width:35.20px;height:35.00px;background:#fff;border:1px solid #b0b0b0"></div>
<svg class="a" style="left:506.2px;top:166.4px;" width="35" height="35" viewBox="0 0 35 35"><circle cx="16.8" cy="20.6" r="4.7" fill="#000"/></svg>
<div class="a" style="left:548.50px;top:166.40px;width:35.20px;height:35.00px;background:#fff;border:1px solid #b0b0b0"></div>
<svg class="a" style="left:548.5px;top:166.4px;" width="35" height="35" viewBox="0 0 35 35"><circle cx="17.6" cy="20.6" r="5.9" fill="none" stroke="#111" stroke-width="1.4"/></svg>
<div class="a" style="left:590.80px;top:166.40px;width:35.20px;height:35.00px;background:#fff;border:1px solid #b0b0b0"></div>
<svg class="a" style="left:590.8px;top:166.4px;" width="35" height="35" viewBox="0 0 35 35"><rect x="13.2" y="13.8" width="8" height="7.6" fill="#000"/></svg>
<div class="a" style="left:379.30px;top:209.30px;width:35.20px;height:35.00px;background:#fff;border:1px solid #b0b0b0"></div>
<svg class="a" style="left:379.3px;top:209.3px;" width="35" height="35" viewBox="0 0 35 35"><rect x="13.6" y="11.4" width="8.2" height="4.8" fill="#f5e050"/><rect x="10.6" y="15.9" width="5" height="5.5" fill="#f47a6e"/><rect x="15.1" y="16.4" width="7.6" height="5.9" fill="#8a86e8"/><rect x="15.1" y="16.4" width="4.5" height="5.9" fill="#2c1f8c"/><path d="M18.2 10.5 V23.2 M14.2 20.2 H23.6" stroke="#111" stroke-width="1.3"/></svg>
<div class="a" style="left:421.60px;top:209.30px;width:35.20px;height:35.00px;background:#fff;border:1px solid #b0b0b0"></div>
<svg class="a" style="left:421.6px;top:209.3px;" width="35" height="35" viewBox="0 0 35 35"><g fill="#000"><path d="M17.5 7.5 L21 11 L17.5 14.5 L14 11 Z"/><path d="M17.5 19.8 L21 23.3 L17.5 26.8 L14 23.3 Z"/><path d="M11.3 13.6 L14.8 17.1 L11.3 20.6 L7.8 17.1 Z"/><path d="M23.7 13.6 L27.2 17.1 L23.7 20.6 L20.2 17.1 Z"/></g></svg>
<div class="a" style="left:463.90px;top:209.30px;width:35.20px;height:35.00px;background:#fff;border:1px solid #b0b0b0"></div>
<svg class="a" style="left:463.9px;top:209.3px;" width="35" height="35" viewBox="0 0 35 35"><path d="M10 8 L25.7 16.6 L15.8 16.6 Z" fill="#fff" stroke="#111" stroke-width="0.9" stroke-linejoin="round"/><path d="M25.7 16.6 L10 26.3 L15.8 16.6 Z" fill="#111" stroke="#111" stroke-width="0.9" stroke-linejoin="round"/></svg>
<div class="a" style="left:506.20px;top:209.30px;width:35.20px;height:35.00px;background:#fff;border:1px solid #b0b0b0"></div>
<svg class="a" style="left:506.2px;top:209.3px;" width="35" height="35" viewBox="0 0 35 35"><path d="M8.6 16 C9.8 14.6 11 14.4 11.8 15.2 L13.9 18.6 C17 12.6 21.5 7.8 27.8 4.9 C22.3 9.6 18 15.8 15.2 22.6 C14.6 23.3 13.2 23.4 12.6 22.7 Z" fill="#000"/></svg>
<div class="a" style="left:379.30px;top:270.30px;width:35.20px;height:35.00px;background:#fff;border:1px solid #b0b0b0"></div>
<svg class="a" style="left:379.3px;top:270.3px;" width="35" height="35" viewBox="0 0 35 35"><path d="M10.6 17.2 C10.2 15.2 11.6 13.4 13.8 13.3 C14.9 11.9 16.6 11.3 18.2 11.4 C21.6 11.6 23.8 13.5 24.4 15.9 C24.9 18.1 23.6 19.9 21.6 19.9 H13.4 C11.8 19.9 10.9 18.8 10.6 17.2 Z" fill="#1d6b5b"/><path d="M13.6 17.4 H21.6" stroke="#d8ebe5" stroke-width="1.1"/><path d="M5.8 22.5 H29.2" stroke="#3b6e64" stroke-width="0.9" stroke-dasharray="1.5 0.5"/></svg>
<div class="a" style="left:375.70px;top:308.70px;width:269.30px;height:1.00px;background:#e2e2e2"></div>
<svg class="a" style="left:379px;top:316px;" width="15" height="11" viewBox="0 0 15 11"><path d="M0.8 5.5 L4 2.6 V8.4 Z M10.2 5.5 L7 2.6 V8.4 Z" fill="#3d74b8"/><path d="M3 5.5 H8" stroke="#3d74b8" stroke-width="2"/><path d="M8 1.2 H13.5 M12 5.5 H13.5 M8 9.8 H13.5" stroke="#777" stroke-width="1"/></svg>
<div class="t" style="left:403.40px;top:317.39px;font-size:10.05px;color:#6a6a6a;font-family:'Liberation Sans',sans-serif;">Change List Level</div>
<div class="a" style="left:403.60px;top:326.30px;width:7.90px;height:0.90px;background:#6a6a6a"></div>
<svg class="a" style="left:631px;top:318px;" width="4" height="7" viewBox="0 0 4 7"><path d="M0 0 L4 3.5 L0 7 Z" fill="#555"/></svg>
<div class="a" style="left:375.70px;top:332.10px;width:267.80px;height:20.60px;background:#c6c6c6"></div>
<div class="t" style="left:403.40px;top:337.97px;font-size:10.2px;color:#222;font-family:'Liberation Sans',sans-serif;">Define New Bullet...</div>
<div class="a" style="left:403.60px;top:347.30px;width:7.90px;height:0.90px;background:#333"></div>
<svg class="a" style="left:634px;top:355px;" width="8" height="6" viewBox="0 0 8 6"><g fill="#999"><rect x="5.5" y="0" width="1.3" height="1.3"/><rect x="0" y="4" width="1.3" height="1.3"/><rect x="5.5" y="4" width="1.3" height="1.3"/></g></svg>
<div class="a" style="left:644.70px;top:311.60px;width:184.30px;height:288.00px;background:#fff;border:1px solid #cfcfcf;box-shadow:1px 2px 3px rgba(0,0,0,0.15)"></div>
<div class="a" style="left:646.70px;top:312.70px;width:179.80px;height:30.70px;background:#c4c4c4"></div>
<div class="a" style="left:649.50px;top:316.00px;width:174.50px;height:25.00px;background:#fff;border:1px solid #dedede"></div>
<svg class="a" style="left:663px;top:323.5px;" width="10" height="8" viewBox="0 0 10 8"><path d="M1 6.3 C1.2 4.3 2.5 3 4.2 2.8 C5 1.8 6.2 1.6 7.2 2.2 C8.4 3 8.8 4.6 8.8 6.3 Z" fill="#2a7565"/><path d="M0 7.2 H10" stroke="#8fc0b2" stroke-width="0.7"/></svg>
<div class="a" style="left:678.00px;top:328.50px;width:131.70px;height:2.00px;background:#b0b0b0"></div>
<div class="a" style="left:649.00px;top:347.30px;width:175.70px;height:26.00px;background:#fff;border:1px solid #b8b8b8"></div>
<svg class="a" style="left:673.1px;top:357.6px;" width="7" height="7" viewBox="0 0 7 7"><circle cx="3.5" cy="3.5" r="2.4" fill="none" stroke="#222" stroke-width="1"/></svg>
<div class="a" style="left:682.60px;top:360.00px;width:127.10px;height:2.00px;background:#b0b0b0"></div>
<div class="a" style="left:649.00px;top:379.00px;width:175.70px;height:26.00px;background:#fff;border:1px solid #b8b8b8"></div>
<div class="a" style="left:684.50px;top:390.40px;width:3.80px;height:3.80px;background:#000"></div>
<div class="a" style="left:690.90px;top:392.00px;width:118.80px;height:2.00px;background:#b0b0b0"></div>
<div class="a" style="left:649.00px;top:410.70px;width:175.70px;height:26.00px;background:#fff;border:1px solid #b8b8b8"></div>
<svg class="a" style="left:694.5px;top:422.0px;" width="5" height="5" viewBox="0 0 5 5"><circle cx="2.5" cy="2.5" r="2.2" fill="#000"/></svg>
<div class="a" style="left:701.50px;top:424.00px;width:108.20px;height:2.00px;background:#b0b0b0"></div>
<div class="a" style="left:649.00px;top:442.40px;width:175.70px;height:26.00px;background:#fff;border:1px solid #b8b8b8"></div>
<svg class="a" style="left:704.5px;top:452.7px;" width="7" height="7" viewBox="0 0 7 7"><circle cx="3.5" cy="3.5" r="2.4" fill="none" stroke="#222" stroke-width="1"/></svg>
<div class="a" style="left:714.00px;top:455.00px;width:95.70px;height:2.00px;background:#b0b0b0"></div>
<div class="a" style="left:649.00px;top:474.10px;width:175.70px;height:26.00px;background:#fff;border:1px solid #b8b8b8"></div>
<div class="a" style="left:716.40px;top:485.50px;width:3.80px;height:3.80px;background:#000"></div>
<div class="a" style="left:722.80px;top:487.00px;width:86.90px;height:2.00px;background:#b0b0b0"></div>
<div class="a" style="left:649.00px;top:505.80px;width:175.70px;height:26.00px;background:#fff;border:1px solid #b8b8b8"></div>
<svg class="a" style="left:725.9px;top:517.1px;" width="5" height="5" viewBox="0 0 5 5"><circle cx="2.5" cy="2.5" r="2.2" fill="#000"/></svg>
<div class="a" style="left:732.90px;top:519.00px;width:76.80px;height:2.00px;background:#b0b0b0"></div>
<div class="a" style="left:649.00px;top:537.50px;width:175.70px;height:26.00px;background:#fff;border:1px solid #b8b8b8"></div>
<svg class="a" style="left:736.5px;top:547.8px;" width="7" height="7" viewBox="0 0 7 7"><circle cx="3.5" cy="3.5" r="2.4" fill="none" stroke="#222" stroke-width="1"/></svg>
<div class="a" style="left:746.00px;top:550.00px;width:63.70px;height:2.00px;background:#b0b0b0"></div>
<div class="a" style="left:649.00px;top:569.20px;width:175.70px;height:26.00px;background:#fff;border:1px solid #b8b8b8"></div>
<div class="a" style="left:748.10px;top:580.60px;width:3.80px;height:3.80px;background:#000"></div>
<div class="a" style="left:754.50px;top:582.00px;width:55.20px;height:2.00px;background:#b0b0b0"></div>
<svg class="a" style="left:513px;top:304px;" width="56" height="56" viewBox="0 0 56 56"><defs><clipPath id="cb"><rect x="0" y="28.1" width="56" height="20.6"/></clipPath></defs><circle cx="27.5" cy="28" r="25.2" fill="#f4e412"/><circle cx="27.5" cy="28" r="25.2" fill="#c6bd2a" clip-path="url(#cb)"/><circle cx="27.5" cy="28" r="25.8" fill="none" stroke="rgba(244,228,18,0.25)" stroke-width="1.2"/></svg>
<svg class="a" style="left:539.5px;top:332px;" width="12" height="18" viewBox="0 0 12 18"><path d="M0.8 0.8 V14.2 L4 11.2 L6.4 16.3 L8.4 15.4 L6.1 10.4 H10.4 Z" fill="#fff" stroke="#111" stroke-width="1" stroke-linejoin="round"/></svg>
<div class="a" style="left:0.00px;top:622.00px;width:1200.00px;height:18.00px;background:#f1f1f1;border-top:1px solid #d5d5d5"></div>
<div class="a" style="left:0.00px;top:640.00px;width:1200.00px;height:2.00px;background:#2a2a2a"></div>
<div class="t" style="left:6.70px;top:626.90px;font-size:9.8px;color:#444;font-family:'Liberation Sans',sans-serif;">Page 1 of 3</div>
<div class="t" style="left:73.30px;top:626.82px;font-size:9.9px;color:#444;font-family:'Liberation Sans',sans-serif;">5 of 120 words</div>
<div class="t" style="left:156.70px;top:626.82px;font-size:9.9px;color:#444;font-family:'Liberation Sans',sans-serif;">English (United States)</div>
<div class="t" style="left:1171.40px;top:626.74px;font-size:10px;color:#444;font-family:'Liberation Sans',sans-serif;">100%</div>
<div class="a" style="left:979.00px;top:622.50px;width:33.00px;height:17.50px;background:#d2d2d2"></div>
<svg class="a" style="left:956px;top:624.5px;" width="12" height="12" viewBox="0 0 12 12"><path d="M0.5 1.5 L5.5 2.5 V11.5 L0.5 10.5 Z M11.5 1.5 L6.5 2.5 V11.5 L11.5 10.5 Z" fill="#fff" stroke="#777" stroke-width="1"/><path d="M1.8 4.5 L4.2 5 M1.8 6.5 L4.2 7 M1.8 8.5 L4.2 9 M7.8 5 L10.2 4.5 M7.8 7 L10.2 6.5 M7.8 9 L10.2 8.5" stroke="#999" stroke-width="0.7"/></svg>
<svg class="a" style="left:988.5px;top:624.5px;" width="14" height="12" viewBox="0 0 14 12"><rect x="0.5" y="0.5" width="13" height="11" fill="#ddd" stroke="#777" stroke-width="1"/><path d="M2.5 3 H11.5 M2.5 5 H11.5 M2.5 7 H11.5 M2.5 9 H11.5" stroke="#888" stroke-width="1"/></svg>
<svg class="a" style="left:1022px;top:624.5px;" width="14" height="13" viewBox="0 0 14 13"><path d="M0.5 0.5 H9 V6 M0.5 0.5 V10.5 H6" fill="none" stroke="#777" stroke-width="1"/><path d="M2.5 3 H7 M2.5 5 H6 M2.5 7 H5" stroke="#999" stroke-width="0.8"/><circle cx="9.5" cy="9" r="3.5" fill="#fff" stroke="#666" stroke-width="1.1"/><path d="M7.2 6.8 L11.8 11.2" stroke="#666" stroke-width="1"/></svg>
<div class="a" style="left:1050.00px;top:630.70px;width:5.50px;height:1.50px;background:#555"></div>
<div class="a" style="left:1058.70px;top:630.80px;width:88.30px;height:0.80px;background:#a8a8a8"></div>
<div class="a" style="left:1100.80px;top:626.50px;width:4.20px;height:9.80px;background:#555"></div>
<div class="a" style="left:1149.70px;top:630.70px;width:7.60px;height:1.50px;background:#555"></div>
<div class="a" style="left:1152.80px;top:627.30px;width:1.50px;height:8.20px;background:#555"></div>
</body></html>
